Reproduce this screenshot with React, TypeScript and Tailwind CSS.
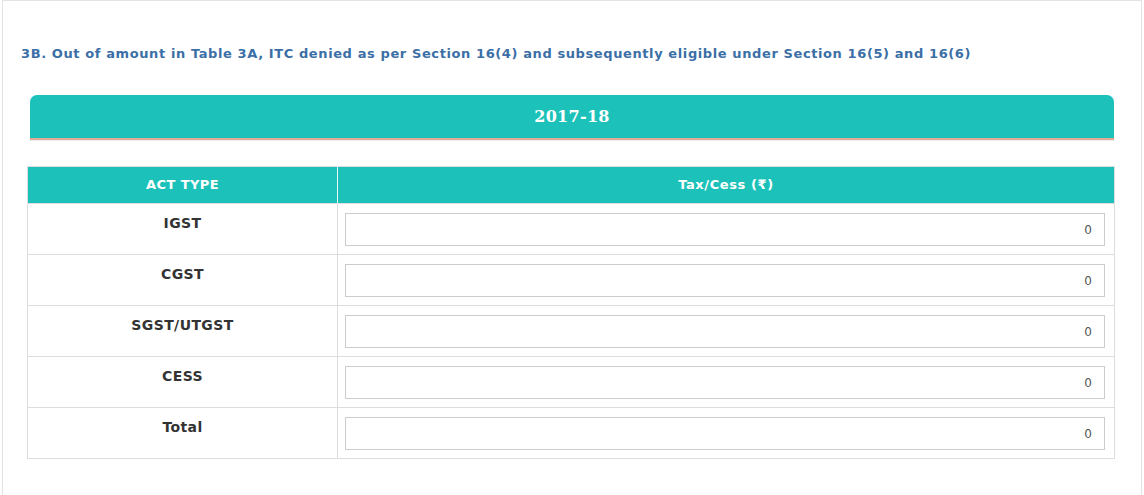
import { useState } from 'react';

const rows = ['IGST', 'CGST', 'SGST/UTGST', 'CESS', 'Total'];

export default function App() {
  const [values, setValues] = useState<Record<string, string>>({
    IGST: '0',
    CGST: '0',
    'SGST/UTGST': '0',
    CESS: '0',
    Total: '0',
  });

  return (
    <div className="w-[1144px] h-[495px] bg-white font-['DejaVu_Sans',Verdana,sans-serif]">
      <div className="mx-[2px] h-full border-x border-t border-[#e3e3e3] pt-[44px]">
        {/* Section title */}
        <h3 className="pl-[18px] text-[13px] leading-[17px] tracking-[0.6px] font-bold text-[#3b6fa6]">
          3B. Out of amount in Table 3A, ITC denied as per Section 16(4) and subsequently eligible under Section 16(5) and 16(6)
        </h3>

        {/* Financial year banner */}
        <div className="mt-[33px] ml-[27px] mr-[27px] h-[45px] rounded-t-[7px] bg-[#1cc2b9] border-b-2 border-[#e3a995] shadow-[0_1px_1px_rgba(0,0,0,0.08)] flex items-center justify-center">
          <span className="font-['DejaVu_Serif',Georgia,serif] text-[16px] font-bold text-white tracking-[0.3px]">2017-18</span>
        </div>

        {/* Tax table */}
        <table className="mt-[26px] ml-[24px] w-[1088px] border-collapse border border-[#dddddd]">
          <thead>
            <tr className="bg-[#1cc2b9] h-[37px]">
              <th className="w-[310px] border-r border-[#e8f7f6] text-[13px] tracking-[0.4px] font-bold text-white text-center">ACT TYPE</th>
              <th className="text-[13px] tracking-[0.6px] font-bold text-white text-center">Tax/Cess (₹)</th>
            </tr>
          </thead>
          <tbody>
            {rows.map((row) => (
              <tr key={row} className="h-[51px] border-t border-[#dddddd]">
                <td className="w-[310px] border-r border-[#dddddd] align-top pt-[11px] text-center text-[14px] leading-[17px] tracking-[0.4px] font-bold text-[#333333]">
                  {row}
                </td>
                <td className="align-top pt-[9px] pl-[7px] pr-[9px]">
                  <input
                    type="text"
                    value={values[row]}
                    onChange={(e) => setValues({ ...values, [row]: e.target.value })}
                    className="block w-full h-[33px] border border-[#cccccc] bg-white px-[12px] text-right text-[12px] text-[#555555] outline-none font-['DejaVu_Sans',Verdana,sans-serif]"
                  />
                </td>
              </tr>
            ))}
          </tbody>
        </table>
      </div>
    </div>
  );
}
